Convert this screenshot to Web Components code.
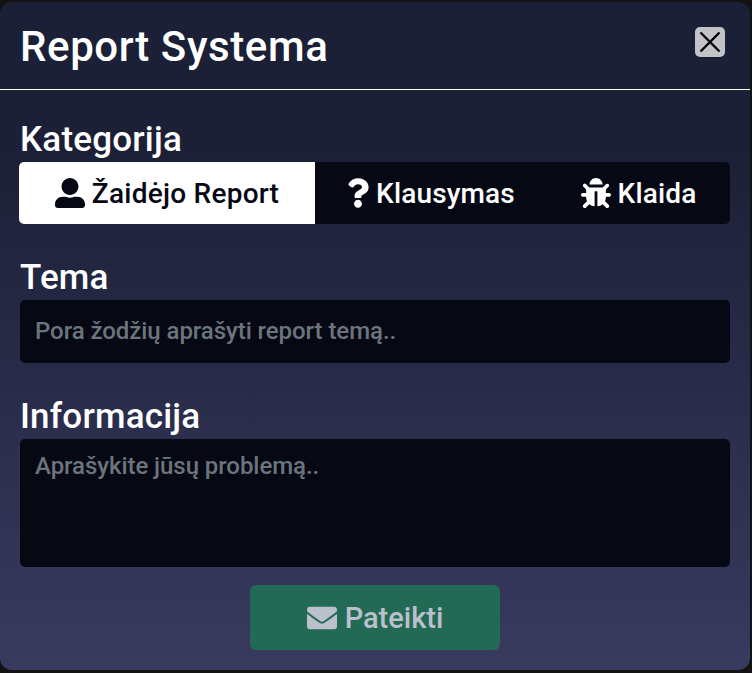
<!DOCTYPE html>
<html lang="lt">
<head>
<meta charset="utf-8">
<title>Report Systema</title>
<style>
  html, body { margin: 0; height: 100%; background: #131313; }
  body { font-family: Roboto, "Noto Sans", sans-serif; overflow: hidden; }
</style>
</head>
<body>
<report-modal heading="Report Systema">
  <form-label>Kategorija</form-label>
  <category-tabs>
    <tab-button active>
      <svg slot="icon" viewBox="0 0 512 512" width="30" height="30"><path fill="currentColor" d="M256 288c79.500 0 144-64.500 144-144S335.500 0 256 0 112 64.500 112 144s64.500 144 144 144zm128 32h-55.100c-22.200 10.200-46.900 16-72.900 16s-50.600-5.800-72.900-16H128C57.300 320 0 377.300 0 448v16c0 26.500 21.500 48 48 48h416c26.500 0 48-21.500 48-48v-16c0-70.700-57.300-128-128-128z"/></svg>
      Žaidėjo Report
    </tab-button>
    <tab-button>
      <svg slot="icon" viewBox="0 0 384 512" width="22" height="30"><path fill="currentColor" d="M202.021 0C122.202 0 70.503 32.703 29.914 91.026c-7.363 10.580-5.093 25.086 5.178 32.874l43.138 32.709c10.373 7.865 25.132 6.026 33.253-4.148 25.049-31.381 43.630-49.449 82.757-49.449 30.764 0 68.816 19.799 68.816 49.631 0 22.552-18.617 34.134-48.993 51.164-35.423 19.860-82.299 44.576-82.299 106.405V320c0 13.255 10.745 24 24 24h72.471c13.255 0 24-10.745 24-24v-5.773c0-42.860 125.268-44.645 125.268-160.627C377.504 66.256 286.902 0 202.021 0zM192 373.459c-38.196 0-69.271 31.075-69.271 69.271 0 38.195 31.075 69.270 69.271 69.270s69.271-31.075 69.271-69.271-31.075-69.270-69.271-69.270z"/></svg>
      Klausymas
    </tab-button>
    <tab-button>
      <svg slot="icon" viewBox="0 0 512 512" width="30" height="30"><path fill="currentColor" d="M511.988 288.900c-.478 17.430-15.217 31.100-32.653 31.100H424v16c0 21.864-4.882 42.584-13.600 61.145l60.228 60.228c12.496 12.497 12.496 32.758 0 45.255-12.498 12.497-32.759 12.496-45.256 0l-54.736-54.736C345.886 467.965 314.351 480 280 480V236c0-6.627-5.373-12-12-12h-24c-6.627 0-12 5.373-12 12v244c-34.351 0-65.886-12.035-90.636-32.108l-54.736 54.736c-12.498 12.497-32.759 12.496-45.256 0-12.496-12.497-12.496-32.758 0-45.255l60.228-60.228C92.882 378.584 88 357.864 88 336v-16H32.666C15.230 320 .491 306.330.013 288.900-.484 270.816 14.028 256 32 256h56v-58.745l-46.628-46.628c-12.496-12.497-12.496-32.758 0-45.255 12.498-12.497 32.758-12.497 45.256 0L141.255 160h229.489l54.627-54.627c12.498-12.497 32.758-12.497 45.256 0 12.496 12.497 12.496 32.758 0 45.255L424 197.255V256h56c17.972 0 32.484 14.816 31.988 32.900zM257 0c-61.856 0-112 50.144-112 112h224C369 50.144 318.856 0 257 0z"/></svg>
      Klaida
    </tab-button>
  </category-tabs>
  <form-label>Tema</form-label>
  <text-box placeholder="Pora žodžių aprašyti report temą.."></text-box>
  <form-label>Informacija</form-label>
  <text-box multiline placeholder="Aprašykite jūsų problemą.."></text-box>
  <submit-button>
    <svg slot="icon" viewBox="0 0 512 512" width="30" height="30"><path fill="currentColor" d="M502.300 190.800c3.900-3.100 9.700-.2 9.700 4.700V400c0 26.500-21.500 48-48 48H48c-26.500 0-48-21.500-48-48V195.600c0-5 5.700-7.800 9.700-4.700 22.400 17.400 52.100 39.500 154.100 113.600 21.100 15.400 56.700 47.800 92.200 47.600 35.700.3 72-32.800 92.300-47.600 102-74.100 131.600-96.300 154-113.700zM256 320c23.200.4 56.600-29.200 73.400-41.400 132.700-96.300 142.800-104.700 173.400-128.700 5.800-4.500 9.200-11.500 9.200-18.900v-19c0-26.500-21.500-48-48-48H48C21.500 64 0 85.500 0 112v19c0 7.400 3.400 14.300 9.200 18.900 30.600 23.900 40.700 32.400 173.400 128.700 16.800 12.200 50.200 41.800 73.400 41.400z"/></svg>
    Pateikti
  </submit-button>
</report-modal>

<script>
class ReportModal extends HTMLElement {
  constructor() {
    super();
    this.attachShadow({ mode: "open" });
    this.shadowRoot.innerHTML = `
<style>
  :host {
    display: flex;
    flex-direction: column;
    box-sizing: border-box;
    width: 750px;
    height: 668px;
    margin-top: 2px;
    border-radius: 12px;
    overflow: hidden;
    color: #fff;
    background: linear-gradient(#1c2036 0%, #1c2036 22%, #383a5f 100%);
  }
  header {
    display: flex;
    justify-content: space-between;
    align-items: flex-start;
    box-sizing: border-box;
    height: 88px;
    padding: 0 25px 0 20px;
    border-bottom: 1px solid #fff;
  }
  h1 { margin: 18px 0 0; font-size: 42px; line-height: 54px; font-weight: 500; letter-spacing: .6px; }
  button {
    display: block;
    width: 30px;
    height: 30px;
    margin-top: 25px;
    padding: 0;
    border: 0;
    border-radius: 5px;
    background: #c2c3c9;
    color: #000;
  }
  svg { display: block; }
  main {
    display: flex;
    flex-direction: column;
    padding: 32px 20px 0;
  }
</style>
<header>
  <h1></h1>
  <button aria-label="Uždaryti"><svg viewBox="0 0 30 30" width="30" height="30"><path d="M5.500 5.500 24.500 24.500M24.500 5.500 5.500 24.500" stroke="currentColor" stroke-width="2.400" fill="none"/></svg></button>
</header>
<main><slot></slot></main>`;
    this.shadowRoot.querySelector("h1").textContent = this.getAttribute("heading");
  }
}

class FormLabel extends HTMLElement {
  constructor() {
    super();
    this.attachShadow({ mode: "open" });
    this.shadowRoot.innerHTML = `
<style>
  :host {
    display: block;
    padding-bottom: 4px;
    font-size: 35px;
    line-height: 36px;
    font-weight: 500;
    letter-spacing: .2px;
    color: #fff;
  }
</style>
<slot></slot>`;
  }
}

class CategoryTabs extends HTMLElement {
  constructor() {
    super();
    this.attachShadow({ mode: "open" });
    this.shadowRoot.innerHTML = `
<style>
  :host {
    display: grid;
    grid-template-columns: 296px 232px 183px;
    height: 62px;
    margin: 0 0 36px -1px;
    border-radius: 5px;
    overflow: hidden;
    background: #060813;
  }
</style>
<slot></slot>`;
  }
}

class TabButton extends HTMLElement {
  constructor() {
    super();
    this.attachShadow({ mode: "open" });
    this.shadowRoot.innerHTML = `
<style>
  :host {
    display: flex;
    align-items: center;
    justify-content: center;
    gap: 7px;
    font-size: 28px;
    font-weight: 500;
    letter-spacing: .15px;
    color: #fff;
  }
  :host([active]) { background: #fff; color: #060813; letter-spacing: .25px; }
</style>
<slot name="icon"></slot><slot></slot>`;
  }
}

class TextBox extends HTMLElement {
  constructor() {
    super();
    this.attachShadow({ mode: "open" });
    this.shadowRoot.innerHTML = `
<style>
  :host { display: block; margin-bottom: 36px; }
  :host([multiline]) { margin-bottom: 18px; }
  .field {
    box-sizing: border-box;
    height: 63px;
    padding: 15px 15px;
    border-radius: 5px;
    background: #060813;
    color: #6c757d;
    font-size: 24px;
    font-weight: 500;
    line-height: 32px;
    letter-spacing: -.06px;
  }
  :host([multiline]) .field { height: 128px; padding-top: 11px; }
</style>
<div class="field"></div>`;
    this.shadowRoot.querySelector(".field").textContent = this.getAttribute("placeholder");
  }
}

class SubmitButton extends HTMLElement {
  constructor() {
    super();
    this.attachShadow({ mode: "open" });
    this.shadowRoot.innerHTML = `
<style>
  :host {
    display: flex;
    align-items: center;
    justify-content: center;
    gap: 8px;
    align-self: center;
    width: 250px;
    height: 65px;
    border-radius: 6px;
    background: #236a54;
    color: #bcbfcc;
    font-size: 29px;
    font-weight: 500;
  }
</style>
<slot name="icon"></slot><slot></slot>`;
  }
}

customElements.define("report-modal", ReportModal);
customElements.define("form-label", FormLabel);
customElements.define("category-tabs", CategoryTabs);
customElements.define("tab-button", TabButton);
customElements.define("text-box", TextBox);
customElements.define("submit-button", SubmitButton);
</script>
</body>
</html>
